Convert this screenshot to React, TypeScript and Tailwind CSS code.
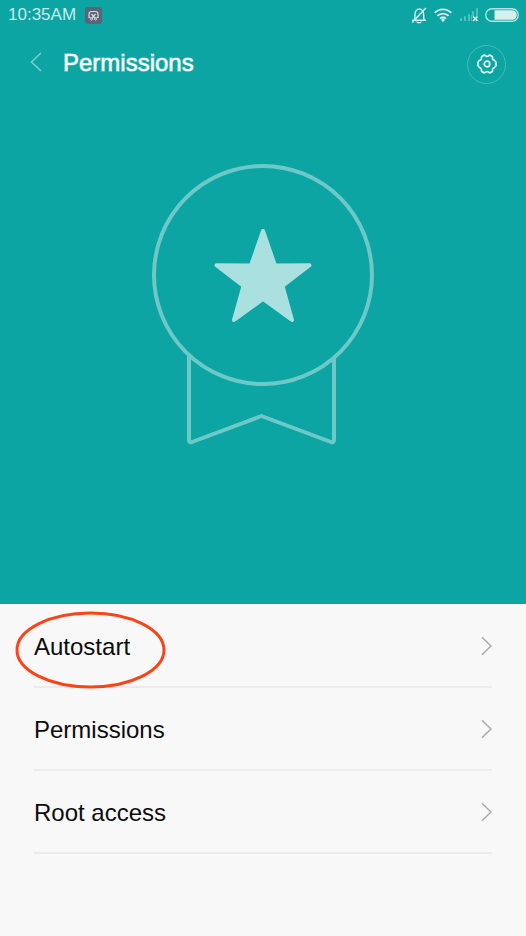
import React from "react";

function ScreenshotBadge() {
  return (
    <svg width="17" height="17" viewBox="0 0 17 17" fill="none" aria-hidden="true">
      <rect width="17" height="17" rx="3" fill="#5b6479" />
      <path d="M5.500 10.500H4V7Q4 4.500 6.500 4.500h4Q13 4.500 13 7v3.500h-1.500" stroke="#d5dce2" strokeWidth="1.2" />
      <path d="M6.500 7l3.800 4.500M10.500 7l-3.800 4.500" stroke="#d5dce2" strokeWidth="1.2" />
      <circle cx="6.500" cy="12" r="1.100" stroke="#d5dce2" strokeWidth=".9" />
      <circle cx="10.500" cy="12" r="1.100" stroke="#d5dce2" strokeWidth=".9" />
    </svg>
  );
}

function MutedBell() {
  return (
    <svg width="16" height="17" viewBox="0 0 16 17" fill="none" stroke="#cdeceb" strokeWidth="1.5" aria-hidden="true">
      <path d="M1 13.200h14M3.400 13c.5-1.500.6-3 .6-5.500C4 4.500 5.800 2 8.300 2s4.300 2.500 4.300 5.500c0 2.500.1 4 .6 5.500" />
      <path d="M5.800 14.500c.3 1.800 4.100 1.800 4.400 0" />
      <path d="M14.800 1L1.200 15.500" />
    </svg>
  );
}

function Wifi() {
  return (
    <svg width="18" height="14" viewBox="0 0 18 14" fill="none" stroke="#d8f1f0" strokeWidth="1.900" aria-hidden="true">
      <path d="M.7 4.900c4.700-4.700 11.900-4.700 16.600 0" />
      <path d="M3.400 7.900c3.200-3.100 8-3.100 11.200 0" />
      <path d="M6 10.600c1.800-1.600 4.200-1.600 6 0" />
      <circle cx="9" cy="12" r="1.700" fill="#d8f1f0" stroke="none" />
    </svg>
  );
}

function Signal() {
  return (
    <svg width="19" height="14" viewBox="0 0 19 14" aria-hidden="true">
      <g fill="#53bfbc">
        <rect x="1" y="10" width="2" height="3" rx=".5" />
        <rect x="5" y="8" width="2" height="5" rx=".5" />
        <rect x="9" y="6" width="2" height="7" rx=".5" />
        <rect x="13" y="3" width="2" height="5" rx=".5" />
        <rect x="12" y="7" width="1" height="6" />
        <rect x="17" y="0" width="2" height="8" rx=".5" />
      </g>
      <path d="M14 8.500l4.500 4.500M18.500 8.500l-4.500 4.500" stroke="#e4f6f5" strokeWidth="1.700" />
    </svg>
  );
}

function Battery() {
  return (
    <svg width="34" height="14" viewBox="0 0 34 14" aria-hidden="true">
      <rect x=".75" y=".75" width="32.500" height="12.500" rx="6.200" fill="none" stroke="#b5e3e1" strokeWidth="1.400" />
      <path d="M9.500 2.200h17.500a4.700 4.700 0 0 1 0 9.600H9.500z" fill="#d4efee" />
    </svg>
  );
}

function SettingsIcon() {
  return (
    <svg width="20" height="20" viewBox="0 0 20 20" fill="none" stroke="#e2f5f4" strokeWidth="1.700" strokeLinejoin="round" aria-hidden="true">
      <path d="M6.800 1.200Q8 1.100 8.700 2Q10 2.700 11.300 2Q12 1.100 13.200 1.200L15.200 2.400Q15.700 3.200 15.500 4.400Q16 6 17.400 6.400Q18.600 7.200 19 8.400V11.600Q18.600 12.800 17.400 13.600Q16 14 15.500 15.600Q15.700 16.800 15.200 17.600L13.200 18.800Q12 18.900 11.300 18Q10 17.300 8.700 18Q8 18.900 6.800 18.800L4.800 17.600Q4.300 16.800 4.500 15.600Q4 14 2.600 13.600Q1.400 12.800 1 11.600V8.400Q1.400 7.200 2.600 6.400Q4 6 4.500 4.400Q4.300 3.200 4.800 2.400Z" />
      <circle cx="10" cy="10" r="2.800" />
    </svg>
  );
}

function AwardRibbon() {
  return (
    <svg width="224" height="284" viewBox="0 0 224 284" fill="none" aria-hidden="true">
      <g stroke="#6dc9c8" strokeWidth="4" strokeLinejoin="round">
        <circle cx="112" cy="112" r="109" />
        <path d="M38 193V277Q38 280 41 279L110.500 253L180 279Q183 280 183 277V195" />
      </g>
      <path
        d="M112 68L124 102.500L158.500 102.200L131.500 123L141 157L112 136L83 157L92.500 123L65.500 102.200L100 102.500Z"
        fill="#aae0df"
        stroke="#aae0df"
        strokeWidth="4"
        strokeLinejoin="round"
      />
    </svg>
  );
}

function StatusBar() {
  return (
    <div className="flex h-[30px] items-center justify-between pl-2 pr-[7px] text-[#c9ebea]">
      <div className="flex items-center gap-[9px]">
        <span className="text-[17px] leading-5">10:35AM</span>
        <ScreenshotBadge />
      </div>
      <div className="flex items-center gap-[7px]">
        <MutedBell />
        <Wifi />
        <Signal />
        <Battery />
      </div>
    </div>
  );
}

const entries = [
  { label: "Autostart", highlighted: true },
  { label: "Permissions", highlighted: false },
  { label: "Root access", highlighted: false },
];

function Entry({ label, highlighted }: { label: string; highlighted: boolean }) {
  return (
    <li className="relative">
      <button type="button" className="flex h-[83px] w-full items-center justify-between border-b-2 border-[#ebebeb] text-left">
        <span className="pt-0.5 text-2xl leading-8 text-[#0c0c0c]">{label}</span>
        <svg width="11" height="20" viewBox="0 0 11 20" fill="none" stroke="#a9a9a9" strokeWidth="1.500" aria-hidden="true">
          <path d="M1 1.200L10 10L1 18.800" />
        </svg>
      </button>
      {highlighted && (
        <svg className="pointer-events-none absolute -left-5 top-1.5" width="152" height="78" viewBox="0 0 152 78" fill="none" aria-hidden="true">
          <ellipse cx="76.500" cy="39" rx="73.500" ry="37" stroke="#fb4318" strokeWidth="3" />
        </svg>
      )}
    </li>
  );
}

export default function App() {
  return (
    <div className="flex min-h-screen flex-col bg-[#f8f8f8] font-['Liberation_Sans',Arial,sans-serif]">
      <div className="bg-[#0ca5a3] pb-[157px]">
        <StatusBar />
        <header className="flex h-[68px] items-center pl-[30px] pr-5">
          <button type="button" aria-label="Back" className="pb-1">
            <svg width="12" height="20" viewBox="0 0 12 20" fill="none" stroke="#7dcfce" strokeWidth="1.500" aria-hidden="true">
              <path d="M11 1L1.500 10L11 19" />
            </svg>
          </button>
          <h1 className="grow pb-[2px] pl-[21px] text-2xl leading-8 text-white [-webkit-text-stroke:1px_#ffffff99]">Permissions</h1>
          <button
            type="button"
            aria-label="Settings"
            className="flex size-[39px] items-center justify-center rounded-full border border-[#48bab8]"
          >
            <SettingsIcon />
          </button>
        </header>
        <div className="flex justify-center pt-[65px]">
          <AwardRibbon />
        </div>
      </div>
      <ul className="px-[34px] pt-px">
        {entries.map((entry) => (
          <Entry key={entry.label} {...entry} />
        ))}
      </ul>
    </div>
  );
}
